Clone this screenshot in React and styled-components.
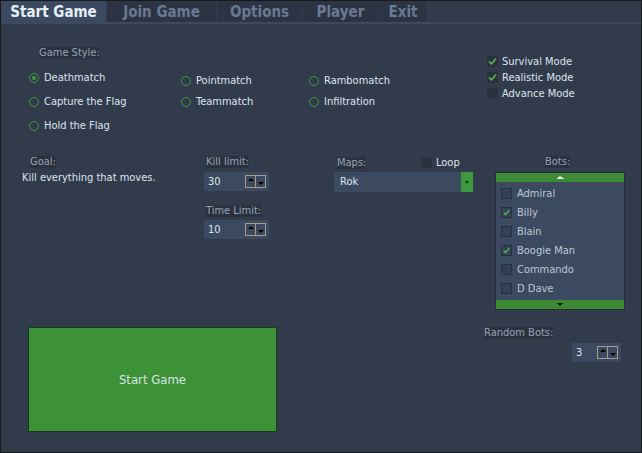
import React from "react";
import styled, { createGlobalStyle } from "styled-components";

const GlobalStyle = createGlobalStyle`
  html, body { margin: 0; padding: 0; background: #323b4c; }
  body {
    font-family: "DejaVu Sans Condensed", "DejaVu Sans", "Liberation Sans", sans-serif;
    font-stretch: condensed;
    font-size: 11px;
    color: #dde4ec;
  }
`;

const Window = styled.div`
  width: 642px;
  height: 453px;
  box-sizing: border-box;
  border: 1px solid #18191c;
  background: #323b4c;
  overflow: hidden;
  display: flex;
  flex-direction: column;
`;

const TabBar = styled.div`
  display: flex;
  gap: 1px;
  height: 21px;
  border-bottom: 2px solid #3b4a61;
  flex-shrink: 0;
`;

const Tab = styled.div`
  width: ${(p) => p.$w}px;
  display: flex;
  align-items: center;
  justify-content: center;
  background: ${(p) => (p.$active ? "#3b4a61" : "#2c3444")};
  color: ${(p) => (p.$active ? "#e8eef4" : "#6a7993")};
  font-weight: bold;
  font-size: 15px;
  white-space: nowrap;
`;

const Row = styled.div`
  display: flex;
  align-items: flex-start;
  margin-top: ${(p) => p.$mt || 0}px;
`;

const Column = styled.div`
  width: ${(p) => p.$w}px;
  display: flex;
  flex-direction: column;
  align-items: flex-start;
  padding-top: ${(p) => p.$pt || 0}px;
  padding-left: ${(p) => p.$pl || 0}px;
  box-sizing: border-box;
  flex-shrink: 0;
`;

const Label = styled.span`
  display: inline-block;
  justify-self: start;
  line-height: 12px;
  background: #2a313f;
  color: #97a3b5;
  margin-left: ${(p) => p.$ml || 0}px;
  margin-top: ${(p) => p.$mt || 0}px;
  white-space: nowrap;
`;

const RadioColumns = styled.div`
  display: flex;
  margin-top: 12px;
`;

const RadioColumn = styled.div`
  width: ${(p) => p.$w}px;
  display: flex;
  flex-direction: column;
  gap: ${(p) => p.$gap}px;
  padding-top: ${(p) => p.$top}px;
`;

const RadioRow = styled.div`
  display: flex;
  align-items: center;
  gap: 5px;
  height: 14px;
  line-height: 14px;
  white-space: nowrap;
`;

const RadioCircle = styled.span`
  width: 10px;
  height: 10px;
  box-sizing: border-box;
  border: 1px solid #3c9a3c;
  border-radius: 50%;
  display: flex;
  align-items: center;
  justify-content: center;
  flex-shrink: 0;
  &::after {
    content: "";
    width: 4px;
    height: 4px;
    border-radius: 50%;
    background: ${(p) => (p.$on ? "#3c9a3c" : "transparent")};
  }
`;

const ModeRow = styled.div`
  display: flex;
  align-items: center;
  gap: 4px;
  height: 16px;
  white-space: nowrap;
`;

const CheckBox = styled.span`
  width: 11px;
  height: 11px;
  box-sizing: border-box;
  background: ${(p) => (p.$list ? "#334056" : "#2a313f")};
  border: ${(p) => (p.$list ? "1px solid #283040" : "none")};
  display: flex;
  align-items: center;
  justify-content: center;
  flex-shrink: 0;
`;

const GoalText = styled.div`
  margin-left: 21px;
  margin-top: 3px;
  line-height: 14px;
  white-space: nowrap;
`;

const Spinbox = styled.div`
  display: flex;
  align-items: center;
  justify-content: space-between;
  width: ${(p) => p.$w}px;
  height: 19px;
  box-sizing: border-box;
  padding: 0 3px 0 4px;
  background: #3b4a60;
  margin-top: ${(p) => p.$mt || 0}px;
  margin-left: ${(p) => p.$ml || 0}px;
`;

const SpinButtons = styled.div`
  display: flex;
  width: 21px;
  height: 13px;
  box-sizing: border-box;
  border: 1px solid #a89c84;
`;

const SpinHalf = styled.div`
  flex: 1;
  display: flex;
  justify-content: center;
  align-items: ${(p) => (p.$up ? "flex-start" : "flex-end")};
  padding: 2px 0;
  border-left: ${(p) => (p.$up ? "none" : "1px solid #a89c84")};
`;

const Arrow = styled.span`
  display: block;
  width: 0;
  height: 0;
  border-left: ${(p) => p.$half || 3}px solid transparent;
  border-right: ${(p) => p.$half || 3}px solid transparent;
  ${(p) =>
    p.$up
      ? `border-bottom: ${p.$h || 3}px solid ${p.$c || "#000"};`
      : `border-top: ${p.$h || 3}px solid ${p.$c || "#000"};`}
`;

const MapsHeader = styled.div`
  display: grid;
  grid-template-columns: 87px auto;
  align-items: center;
  height: 12px;
`;

const LoopGroup = styled.div`
  display: flex;
  align-items: center;
  gap: 4px;
  white-space: nowrap;
`;

const Dropdown = styled.div`
  display: flex;
  width: 139px;
  height: 20px;
  margin-top: 4px;
  background: #3b4a60;
`;

const DropText = styled.div`
  flex: 1;
  padding-left: 6px;
  line-height: 20px;
`;

const DropButton = styled.div`
  width: 12px;
  background: #3c9a3c;
  display: flex;
  align-items: center;
  justify-content: center;
`;

const BotsList = styled.div`
  margin-top: 4px;
  width: 130px;
  height: 138px;
  box-sizing: border-box;
  border: 1px solid #262d3a;
  background: #3b4a60;
  display: flex;
  flex-direction: column;
`;

const ScrollBar = styled.div`
  height: 9px;
  background: #3d8b35;
  display: flex;
  flex-direction: column;
  align-items: center;
  justify-content: center;
`;

const UpLine = styled.span`
  width: 7px;
  height: 1px;
  background: #dfe6ee;
`;

const BotItems = styled.div`
  flex: 1;
  padding-top: 2px;
  display: flex;
  flex-direction: column;
`;

const BotItem = styled.div`
  height: 19px;
  display: flex;
  align-items: center;
  gap: 5px;
  padding-left: 5px;
  color: #bdc8d6;
  white-space: nowrap;
`;

const StartButton = styled.button`
  margin-left: 27px;
  width: 249px;
  height: 105px;
  box-sizing: border-box;
  background: #3d9137;
  border: 1px solid #173f17;
  color: #d6e4e6;
  font-family: inherit;
  font-stretch: condensed;
  font-size: 13px;
  display: flex;
  align-items: center;
  justify-content: center;
  padding: 0;
  cursor: pointer;
`;

const Check = () => (
  <svg width="11" height="11" viewBox="0 0 11 11">
    <polyline points="2,5.5 4.5,8 9,2.5" fill="none" stroke="#4fb04a" strokeWidth="1.8" />
  </svg>
);

const Spin = ({ value, w, mt, ml }) => (
  <Spinbox $w={w} $mt={mt} $ml={ml}>
    <span>{value}</span>
    <SpinButtons>
      <SpinHalf $up>
        <Arrow $up />
      </SpinHalf>
      <SpinHalf>
        <Arrow />
      </SpinHalf>
    </SpinButtons>
  </Spinbox>
);

const tabs = [
  ["Start Game", 105, true],
  ["Join Game", 109],
  ["Options", 85],
  ["Player", 75],
  ["Exit", 48],
];

const bots = [
  ["Admiral", false],
  ["Billy", true],
  ["Blain", false],
  ["Boogie Man", true],
  ["Commando", false],
  ["D Dave", false],
];

export default function App() {
  return (
    <>
      <GlobalStyle />
      <Window>
        <TabBar>
          {tabs.map(([t, w, a]) => (
            <Tab key={t} $w={w} $active={a}>
              {t}
            </Tab>
          ))}
        </TabBar>

        <Row>
          <Column $w={486} $pt={23} $pl={28}>
            <Label $ml={10}>Game Style:</Label>
            <RadioColumns>
              <RadioColumn $w={152} $gap={10} $top={0}>
                <RadioRow><RadioCircle $on />Deathmatch</RadioRow>
                <RadioRow><RadioCircle />Capture the Flag</RadioRow>
                <RadioRow><RadioCircle />Hold the Flag</RadioRow>
              </RadioColumn>
              <RadioColumn $w={128} $gap={7} $top={3}>
                <RadioRow><RadioCircle />Pointmatch</RadioRow>
                <RadioRow><RadioCircle />Teammatch</RadioRow>
              </RadioColumn>
              <RadioColumn $w={120} $gap={7} $top={3}>
                <RadioRow><RadioCircle />Rambomatch</RadioRow>
                <RadioRow><RadioCircle />Infiltration</RadioRow>
              </RadioColumn>
            </RadioColumns>
          </Column>
          <Column $w={150} $pt={29}>
            <ModeRow><CheckBox><Check /></CheckBox>Survival Mode</ModeRow>
            <ModeRow><CheckBox><Check /></CheckBox>Realistic Mode</ModeRow>
            <ModeRow><CheckBox />Advance Mode</ModeRow>
          </Column>
        </Row>

        <Row $mt={23}>
          <Column $w={203}>
            <Label $ml={29}>Goal:</Label>
            <GoalText>Kill everything that moves.</GoalText>
          </Column>
          <Column $w={130}>
            <Label $ml={2}>Kill limit:</Label>
            <Spin value="30" w={65} mt={4} />
            <Label $ml={2} $mt={14}>Time Limit:</Label>
            <Spin value="10" w={65} mt={3} />
          </Column>
          <Column $w={161}>
            <MapsHeader>
              <Label $ml={3}>Maps:</Label>
              <LoopGroup>
                <CheckBox />
                Loop
              </LoopGroup>
            </MapsHeader>
            <Dropdown>
              <DropText>Rok</DropText>
              <DropButton>
                <Arrow $half={2} $h={3} $c="#17351a" />
              </DropButton>
            </Dropdown>
          </Column>
          <Column $w={130}>
            <Label $ml={50}>Bots:</Label>
            <BotsList>
              <ScrollBar>
                <Arrow $up $half={3} $h={2} $c="#dfe6ee" />
                <UpLine />
              </ScrollBar>
              <BotItems>
                {bots.map(([n, c]) => (
                  <BotItem key={n}>
                    <CheckBox $list>{c && <Check />}</CheckBox>
                    {n}
                  </BotItem>
                ))}
              </BotItems>
              <ScrollBar>
                <Arrow $half={3} $h={3} />
              </ScrollBar>
            </BotsList>
          </Column>
        </Row>

        <Row $mt={17}>
          <StartButton>Start Game</StartButton>
          <Column $w={150} $pl={207}>
            <Label>Random Bots:</Label>
            <Spin value="3" w={49} mt={4} ml={88} />
          </Column>
        </Row>
      </Window>
    </>
  );
}
